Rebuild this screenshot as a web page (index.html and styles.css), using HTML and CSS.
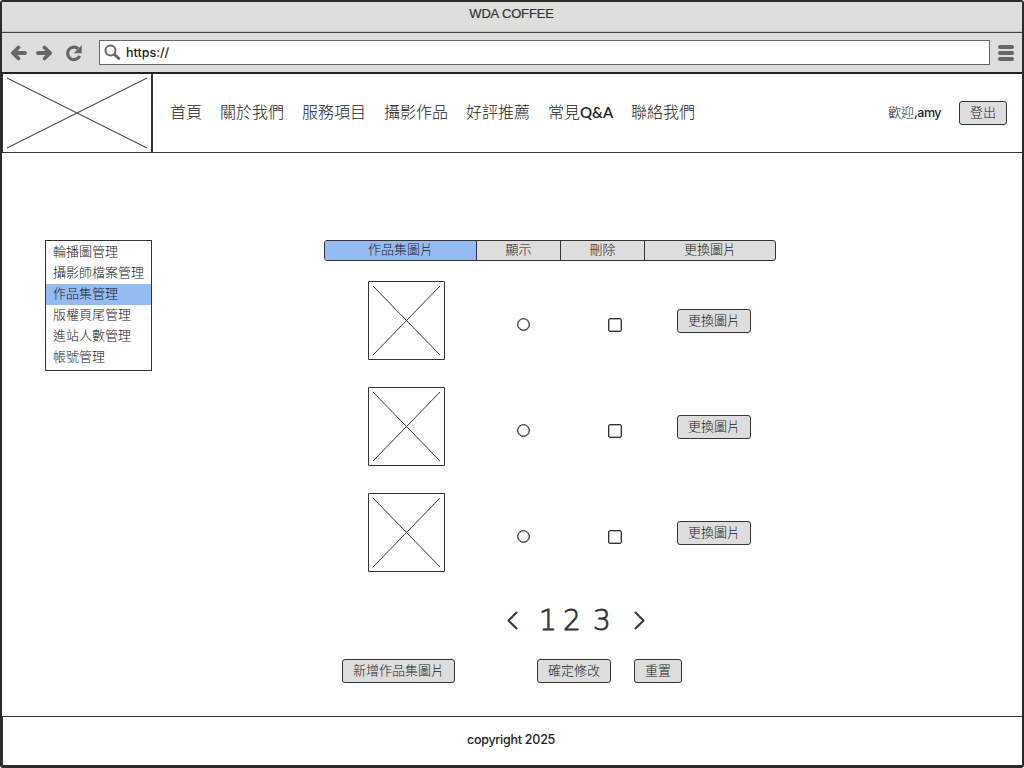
FILE: index.html
```html
<!DOCTYPE html>
<html lang="zh-Hant">
<head>
<meta charset="utf-8">
<title>WDA COFFEE</title>
<link rel="stylesheet" href="styles.css">
</head>
<body>
<div class="window">
  <div class="titlebar"><span>WDA COFFEE</span></div>
  <div class="toolbar">
    <svg class="nav-icons" width="84" height="20" viewBox="0 0 84 20">
      <g fill="none" stroke="#666" stroke-width="3.800" stroke-linecap="round" stroke-linejoin="round">
        <path d="M17 10H6M10.500 4.500L4.800 10l5.700 5.500"/>
        <path d="M30 10h11M36.500 4.500l5.700 5.500l-5.700 5.500"/>
      </g>
      <path d="M71.700 12.900a6.300 6.300 0 1 1-1.500-7.200" fill="none" stroke="#666" stroke-width="3.200"/>
      <path d="M73.700 2.300v8h-8z" fill="#666"/>
    </svg>
    <div class="address">
      <svg width="17" height="17" viewBox="0 0 17 17"><circle cx="6.500" cy="6.500" r="5" fill="none" stroke="#666" stroke-width="2"/><path d="M10.500 10.500L14.800 14.500" stroke="#666" stroke-width="3" stroke-linecap="round"/></svg>
      <span>https://</span>
    </div>
    <div class="menu"><i></i><i></i><i></i></div>
  </div>
  <header class="header">
    <div class="logo"><svg width="148" height="78" viewBox="0 0 148 78"><path d="M4 4L144 74M144 4L4 74" stroke="#4c4c4e" stroke-width="1.100"/></svg></div>
    <nav class="nav"><span>首頁</span><span>關於我們</span><span>服務項目</span><span>攝影作品</span><span>好評推薦</span><span class="faq">常見<b>Q&amp;A</b></span><span>聯絡我們</span></nav>
    <span class="welcome">歡迎<b>,amy</b></span>
    <button class="btn logout">登出</button>
  </header>
  <main class="main">
    <ul class="side">
      <li>輪播圖管理</li><li>攝影師檔案管理</li><li class="active">作品集管理</li><li>版權頁尾管理</li><li>進站人數管理</li><li>帳號管理</li>
    </ul>
    <section class="content">
      <div class="tabs"><span class="active">作品集圖片</span><span>顯示</span><span>刪除</span><span>更換圖片</span></div>
      <div class="rows">
        <div class="row"><svg class="thumb" width="77" height="79" viewBox="0 0 77 79"><path d="M.5 .5h76v78H.5z"/><path d="M5 5L72 74M72 5L5 74"/></svg><span class="radio"></span><span class="check"></span><button class="btn">更換圖片</button></div>
        <div class="row"><svg class="thumb" width="77" height="79" viewBox="0 0 77 79"><path d="M.5 .5h76v78H.5z"/><path d="M5 5L72 74M72 5L5 74"/></svg><span class="radio"></span><span class="check"></span><button class="btn">更換圖片</button></div>
        <div class="row"><svg class="thumb" width="77" height="79" viewBox="0 0 77 79"><path d="M.5 .5h76v78H.5z"/><path d="M5 5L72 74M72 5L5 74"/></svg><span class="radio"></span><span class="check"></span><button class="btn">更換圖片</button></div>
      </div>
      <div class="pager">
        <svg width="12" height="20" viewBox="0 0 12 20"><path d="M10.500 2.500L2.500 10.500l8 8"/></svg>
        <span class="n1">1</span><span class="n2">2</span><span class="n3">3</span>
        <svg width="12" height="20" viewBox="0 0 12 20"><path d="M2.500 2.500l8 8l-8 8"/></svg>
      </div>
      <div class="actions"><button class="btn add">新增作品集圖片</button><button class="btn confirm">確定修改</button><button class="btn reset">重置</button></div>
    </section>
  </main>
  <footer class="footer"><span>copyright 2025</span></footer>
</div>
</body>
</html>
```
FILE: styles.css
```css
* { box-sizing: border-box; }
body { margin: 0; background: #fff; color: #222; font: 300 13px/21px "Noto Sans CJK TC", sans-serif; }
svg { display: block; flex: none; }
.window { width: 1024px; height: 768px; border: 2px solid #2d2a2b; border-bottom-width: 3px; border-radius: 3px; display: flex; flex-direction: column; overflow: hidden; }
.titlebar { height: 31px; background: #dededc; border-bottom: 1px solid #444; box-shadow: inset 0 -1px #c4c4c2; text-align: center; color: #333; font: 13px/24px "Liberation Sans", sans-serif; padding-right: 1px; -webkit-text-stroke: .2px #333; }
.titlebar span { letter-spacing: -.15px; }
.toolbar { height: 41px; background: #dededc; border-bottom: 2px solid #252122; display: flex; align-items: center; padding-left: 6px; }
.address { width: 891px; height: 25px; margin-left: 7px; background: #fff; border: 1px solid #666; display: flex; align-items: center; gap: 5px; padding-left: 4px; font: 500 12.500px/24px Inter, sans-serif; color: #222; }
.address span { padding-top: 1px; }
.menu { margin-left: 8px; display: grid; gap: 2px; }
.menu i { width: 16px; height: 4px; border-radius: 2px; background: #666; }
.header { height: 79px; border-bottom: 1px solid #333; display: flex; }
.logo { width: 151px; border-left: 1px solid #333; border-right: 2px solid #333; }
.nav { width: 718px; padding: 27px 0 0 17px; display: flex; gap: 18px; font-size: 16px; line-height: 21px; white-space: nowrap; }
.nav b { font: 600 15px/20px Lato, sans-serif; letter-spacing: -.2px; }
.faq { width: 65px; }
.welcome { width: 70px; padding: 27px 0 0 17px; white-space: nowrap; }
.welcome b { font: 500 12.500px/20px Inter, sans-serif; letter-spacing: -.5px; }
.btn { height: 24px; padding: 0 0 3px; border: 1px solid #333; border-radius: 3px; background: #ddd; color: #222; font: inherit; line-height: 19px; text-align: center; }
.logout { width: 48px; margin: 27px 0 0 18px; }
.main { height: 563px; padding: 87px 0 0 43px; display: flex; align-items: flex-start; }
.side { width: 107px; height: 131px; margin: 0; padding: 1px 0 0; border: 1px solid #333; list-style: none; }
.side li { height: 21px; padding-left: 7px; line-height: 18px; white-space: nowrap; }
.side .active, .tabs .active { background: #95bbf3; }
.side li.active { height: 21px; }
.content { width: 452px; margin-left: 172px; }
.tabs { height: 21px; border: 1px solid #333; border-radius: 3px; display: grid; grid-template-columns: 151px 84px 84px 131px; overflow: hidden; background: #ddd; text-align: center; line-height: 15px; }
.tabs span + span { border-left: 1px solid #333; }
.rows { padding-top: 20px; display: grid; gap: 27px; }
.row { height: 79px; padding-left: 44px; display: flex; }
.thumb { fill: none; stroke: #333; stroke-width: 1; }
.radio { width: 13px; height: 13px; margin: 37px 0 0 72px; border: 1px solid #333; border-radius: 50%; box-shadow: inset 0 0 0 .5px #666; }
.check { width: 14px; height: 14px; margin: 37px 0 0 78px; border: 1px solid #333; border-radius: 2px; box-shadow: inset 0 0 0 .5px #666; }
.row .btn { width: 74px; margin: 28px 0 0 55px; }
.pager { height: 50px; margin-top: 23px; padding-left: 182px; display: flex; align-items: center; color: #333; font: 200 28px/50px "DejaVu Sans", sans-serif; -webkit-text-stroke: .8px #333; }
.pager path { fill: none; stroke: #333; stroke-width: 2; stroke-linecap: round; stroke-linejoin: round; }
.pager span { padding-top: 2px; }
.n1 { width: 24px; margin-left: 21px; }
.n2 { width: 30px; }
.n3 { width: 40px; }
.actions { display: flex; margin-top: 14px; padding-left: 18px; }
.add { width: 113px; }
.confirm { width: 74px; margin-left: 82px; }
.reset { width: 48px; margin-left: 23px; }
.footer { height: 49px; border-top: 1px solid #333; border-left: 1px solid #333; padding-right: 3px; text-align: center; font: 500 12.500px/46px Inter, sans-serif; letter-spacing: -.25px; }
```
